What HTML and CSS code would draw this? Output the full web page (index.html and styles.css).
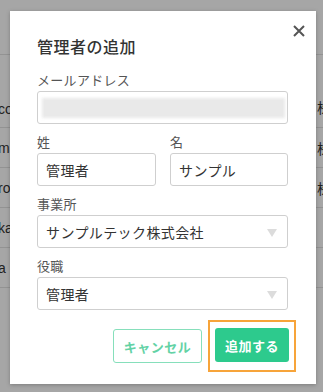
FILE: index.html
```html
<!DOCTYPE html>
<html>
<head>
    <title>管理者の追加</title>
    <link rel="stylesheet" href="styles.css">
</head>
<body>
    <div class="page">
        <div class="page-head"></div>
        <div class="row row-first"><span class="cell-left">co</span><span class="cell-right">株式会社</span></div>
        <div class="row"><span class="cell-left">ma</span><span class="cell-right">株式会社</span></div>
        <div class="row"><span class="cell-left">ro</span><span class="cell-right">株式会社</span></div>
        <div class="row"><span class="cell-left">ka</span></div>
        <div class="row"><span class="cell-left">a</span></div>
    </div>

    <div class="overlay">
        <div class="modal">
            <button class="close-btn" aria-label="閉じる">
                <svg width="12" height="12" viewBox="0 0 12 12">
                    <path d="M1 1 L11 11 M11 1 L1 11" stroke="#555" stroke-width="2" fill="none"/>
                </svg>
            </button>

            <h2 class="modal-title">管理者の追加</h2>

            <div class="field">
                <label class="field-label">メールアドレス</label>
                <div class="input">
                    <div class="redacted"></div>
                </div>
            </div>

            <div class="field-pair">
                <div class="field">
                    <label class="field-label">姓</label>
                    <div class="input">管理者</div>
                </div>
                <div class="field">
                    <label class="field-label">名</label>
                    <div class="input">サンプル</div>
                </div>
            </div>

            <div class="field">
                <label class="field-label">事業所</label>
                <div class="input select">サンプルテック株式会社<span class="arrow"></span></div>
            </div>

            <div class="field">
                <label class="field-label">役職</label>
                <div class="input select">管理者<span class="arrow"></span></div>
            </div>

            <div class="actions">
                <button class="btn btn-cancel">キャンセル</button>
                <span class="focus-ring"><button class="btn btn-submit">追加する</button></span>
            </div>
        </div>
    </div>
</body>
</html>
```

FILE: styles.css
```css
body {
    margin: 0;
    font-family: "Noto Sans CJK JP", "Noto Sans", sans-serif;
    background-color: #fff;
    overflow: hidden;
}

.page {
    width: 323px;
    height: 392px;
    color: #333;
    font-family: "Liberation Sans", "Noto Sans CJK JP", sans-serif;
    font-size: 14px;
}

.page-head {
    height: 55px;
    border-bottom: 1px solid #e2e2e2;
    box-sizing: border-box;
}

.row {
    display: flex;
    align-items: center;
    height: 40px;
    border-bottom: 1px solid #e2e2e2;
    box-sizing: border-box;
    position: relative;
    overflow: hidden;
}

.row-first {
    height: 73px;
    align-items: flex-end;
    padding-bottom: 10px;
}

.cell-left {
    margin-left: -2px;
}

.cell-right {
    position: absolute;
    left: 317px;
    font-family: "Noto Sans CJK JP", sans-serif;
    white-space: nowrap;
}

.overlay {
    position: absolute;
    top: 0;
    left: 0;
    width: 323px;
    height: 392px;
    background-color: rgba(0, 0, 0, 0.35);
}

.modal {
    position: absolute;
    left: 10px;
    top: 11px;
    width: 306px;
    height: 373px;
    box-sizing: border-box;
    padding: 23px 28px 0 27px;
    background-color: #fff;
    box-shadow: 0 1px 4px rgba(0, 0, 0, 0.25);
}

.close-btn {
    position: absolute;
    top: 14px;
    right: 11px;
    width: 12px;
    height: 12px;
    padding: 0;
    border: none;
    background: none;
    display: flex;
}

.modal-title {
    margin: 0 0 13px 0;
    font-size: 16px;
    line-height: 24px;
    font-weight: 500;
    color: #333;
    letter-spacing: 0.5px;
}

.field {
    display: flex;
    flex-direction: column;
    gap: 2px;
    margin-bottom: 9px;
}

.field-pair {
    display: grid;
    grid-template-columns: 119px 118px;
    column-gap: 14px;
}

.field-label {
    font-size: 13px;
    line-height: 18px;
    color: #555;
    letter-spacing: 0.3px;
}

.input {
    height: 33px;
    box-sizing: border-box;
    border: 1px solid #cfcfcf;
    border-radius: 3px;
    padding: 0 8px;
    display: flex;
    align-items: center;
    font-size: 14px;
    color: #333;
    letter-spacing: 0.4px;
    position: relative;
}

.redacted {
    position: absolute;
    left: 4px;
    right: 2px;
    top: 6px;
    bottom: 5px;
    background-color: #e9e9e9;
    filter: blur(1.5px);
}

.select .arrow {
    position: absolute;
    right: 10px;
    top: 13px;
    width: 0;
    height: 0;
    border-left: 5px solid transparent;
    border-right: 5px solid transparent;
    border-top: 8px solid #dcdcdc;
}

.actions {
    display: flex;
    justify-content: flex-end;
    align-items: center;
    gap: 6px;
    margin-top: 10px;
    margin-right: -8px;
}

.btn {
    font-family: "Noto Sans CJK JP", sans-serif;
    font-size: 13px;
    font-weight: bold;
    height: 34px;
    border-radius: 3px;
    cursor: pointer;
    letter-spacing: 0.5px;
}

.btn-cancel {
    width: 89px;
    background-color: #fff;
    border: 1.5px solid #86dfbb;
    color: #63d2a5;
}

.focus-ring {
    display: flex;
    padding: 6px 5px 8px 5px;
    border: 2px solid #f7a43a;
}

.btn-submit {
    width: 74px;
    background-color: #2dca8d;
    border: none;
    color: #fff;
}
```
